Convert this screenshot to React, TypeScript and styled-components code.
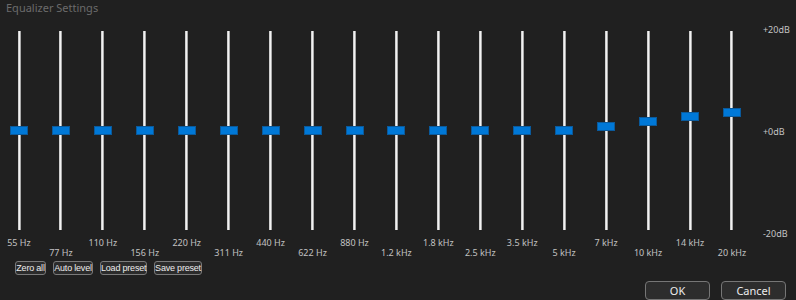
import React from "react";
import styled, { createGlobalStyle } from "styled-components";

const Global = createGlobalStyle`
  html, body { margin: 0; padding: 0; background: #202020; }
  body { width: 796px; height: 300px; overflow: hidden; font-family: "Noto Sans", "Open Sans", sans-serif; }
`;

const Window = styled.div`
  width: 796px;
  height: 300px;
  background: #202020;
  display: flex;
  flex-direction: column;
  box-sizing: border-box;
`;

const Title = styled.div`
  height: 16px;
  line-height: 16px;
  padding-left: 6px;
  font-size: 11px;
  color: #6b6b6b;
`;

const Body = styled.div`
  display: flex;
  margin-top: 15px;
`;

const Bands = styled.div`
  display: grid;
  grid-template-columns: repeat(18, 38px);
  column-gap: 3.94px;
`;

const Band = styled.div`
  display: flex;
  flex-direction: column;
  align-items: center;
`;

const Track = styled.div`
  position: relative;
  width: 3px;
  height: 199px;
  background: linear-gradient(to right, #cfcfcf 0, #cfcfcf 1px, #f2f2f2 1px, #f2f2f2 2px, #a8a8a8 2px);
`;

const Thumb = styled.div`
  position: absolute;
  left: 50%;
  width: 18px;
  height: 9px;
  margin-left: -9px;
  box-sizing: border-box;
  background: #0078d7;
  border: 1px solid #0a5a9c;
`;

const FreqLabel = styled.div<{ $low: boolean }>`
  margin-top: ${(p) => (p.$low ? 18 : 8)}px;
  height: 10px;
  line-height: 10px;
  font-size: 9px;
  color: #c2c2c2;
  white-space: nowrap;
`;

const Scale = styled.div`
  margin-left: 12px;
  margin-top: -6px;
  height: 214px;
  display: flex;
  flex-direction: column;
  justify-content: space-between;
`;

const ScaleLabel = styled.div`
  height: 10px;
  line-height: 10px;
  font-size: 9px;
  color: #c4c4c4;
  white-space: nowrap;
`;

const Tools = styled.div`
  display: flex;
  gap: 7px;
  padding-left: 15px;
  margin-top: 3px;
`;

const SmallButton = styled.button<{ $w: number }>`
  width: ${(p) => p.$w}px;
  height: 14px;
  padding: 0;
  box-sizing: border-box;
  background: #2b2b2b;
  border: 1px solid #7a7a7a;
  border-radius: 3px;
  color: #ededed;
  font-family: "Liberation Sans", Arial, sans-serif;
  font-size: 9px;
  line-height: 11px;
  letter-spacing: -0.2px;
  white-space: nowrap;
`;

const Footer = styled.div`
  display: flex;
  justify-content: flex-end;
  gap: 11px;
  padding-right: 10px;
  margin-top: 6px;
`;

const DialogButton = styled.button`
  width: 65px;
  height: 19px;
  padding: 0;
  box-sizing: border-box;
  background: #2d2d2d;
  border: 1px solid #767676;
  border-radius: 4px;
  color: #ececec;
  font-family: "Noto Sans", sans-serif;
  font-size: 11px;
  line-height: 16px;
`;

const bands: { f: string; off: number }[] = [
  { f: "55 Hz", off: 0 },
  { f: "77 Hz", off: 0 },
  { f: "110 Hz", off: 0 },
  { f: "156 Hz", off: 0 },
  { f: "220 Hz", off: 0 },
  { f: "311 Hz", off: 0 },
  { f: "440 Hz", off: 0 },
  { f: "622 Hz", off: 0 },
  { f: "880 Hz", off: 0 },
  { f: "1.2 kHz", off: 0 },
  { f: "1.8 kHz", off: 0 },
  { f: "2.5 kHz", off: 0 },
  { f: "3.5 kHz", off: 0 },
  { f: "5 kHz", off: 0 },
  { f: "7 kHz", off: 4.5 },
  { f: "10 kHz", off: 9.5 },
  { f: "14 kHz", off: 14 },
  { f: "20 kHz", off: 18.5 },
];

export default function App() {
  return (
    <Window>
      <Global />
      <Title>Equalizer Settings</Title>
      <Body>
        <Bands>
          {bands.map((b, i) => (
            <Band key={b.f}>
              <Track>
                <Thumb style={{ top: 95 - b.off }} />
              </Track>
              <FreqLabel $low={i % 2 === 1}>{b.f}</FreqLabel>
            </Band>
          ))}
        </Bands>
        <Scale>
          <ScaleLabel>+20dB</ScaleLabel>
          <ScaleLabel>+0dB</ScaleLabel>
          <ScaleLabel>-20dB</ScaleLabel>
        </Scale>
      </Body>
      <Tools>
        <SmallButton $w={31}>Zero all</SmallButton>
        <SmallButton $w={40}>Auto level</SmallButton>
        <SmallButton $w={47}>Load preset</SmallButton>
        <SmallButton $w={48}>Save preset</SmallButton>
      </Tools>
      <Footer>
        <DialogButton>OK</DialogButton>
        <DialogButton>Cancel</DialogButton>
      </Footer>
    </Window>
  );
}
